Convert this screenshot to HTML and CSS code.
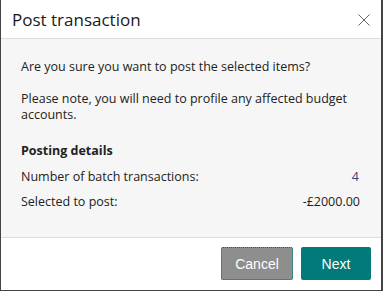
FILE: index.html
```html
<!DOCTYPE html>
<html lang="en">
<head>
    <meta charset="UTF-8">
    <title>Post transaction</title>
    <link rel="stylesheet" href="styles.css">
</head>
<body>
    <div class="dialog">
        <div class="dialog-header">
            <h1>Post transaction</h1>
            <button class="close-btn" aria-label="Close">
                <svg width="12" height="12" viewBox="0 0 12 12">
                    <path d="M0.5 0.5 L11.5 11.5 M11.5 0.5 L0.5 11.5" stroke="#666" stroke-width="1" fill="none"/>
                </svg>
            </button>
        </div>

        <div class="dialog-body">
            <p>Are you sure you want to post the selected items?</p>
            <p>Please note, you will need to profile any affected budget accounts.</p>

            <h2>Posting details</h2>
            <div class="detail-row">
                <span>Number of batch transactions:</span>
                <span class="value">4</span>
            </div>
            <div class="detail-row">
                <span>Selected to post:</span>
                <span>-£2000.00</span>
            </div>
        </div>

        <div class="dialog-footer">
            <button class="btn btn-cancel">Cancel</button>
            <button class="btn btn-next">Next</button>
        </div>
    </div>
</body>
</html>
```

FILE: styles.css
```css
body {
    margin: 0;
    background: #fff;
    font-family: "Open Sans", "Noto Sans", sans-serif;
    color: #222;
}
.dialog {
    width: 380px;
    height: 290px;
    border-left: 1px solid #444;
    border-right: 2px solid #444;
    border-bottom: 1px solid #444;
    display: flex;
    flex-direction: column;
    background: #fff;
}
.dialog-header {
    height: 39px;
    flex-shrink: 0;
    border-bottom: 1px solid #ddd;
    display: flex;
    align-items: center;
    justify-content: space-between;
    padding: 0 11px 0 11px;
    box-sizing: border-box;
}
.dialog-header h1 {
    margin: 0;
    font-size: 17px;
    line-height: 22px;
    font-weight: normal;
    color: #1a1a1a;
    padding-top: 2px;
}
.close-btn {
    background: none;
    border: none;
    padding: 0;
    width: 12px;
    height: 12px;
    display: flex;
    margin-top: 1px;
}
.dialog-body {
    flex: 1;
    background: #f6f6f6;
    border-bottom: 1px solid #ddd;
    padding: 20px 21px 0 20px;
    font-size: 12.5px;
}
.dialog-body p {
    margin: 0 0 16px 0;
    line-height: 16px;
}
.dialog-body h2 {
    font-size: 12.5px;
    line-height: 16px;
    font-weight: bold;
    margin: 20px 0 10px 0;
}
.detail-row {
    display: flex;
    justify-content: space-between;
    line-height: 16px;
    margin-bottom: 9px;
}
.detail-row .value {
    color: #3c3c78;
    padding-right: 1px;
}
.dialog-footer {
    height: 52px;
    flex-shrink: 0;
    display: flex;
    justify-content: flex-end;
    align-items: flex-start;
    gap: 8px;
    padding: 9px 10px 0 0;
    box-sizing: border-box;
}
.btn {
    font-family: "Liberation Sans", Arial, sans-serif;
    font-size: 14px;
    color: #fff;
    border: none;
    border-radius: 2px;
    height: 33px;
    cursor: pointer;
}
.btn-cancel {
    width: 72px;
    background: #8e8e8e;
    outline: 1px dotted #0a6e6e;
    outline-offset: -1px;
}
.btn-next {
    width: 70px;
    background: #017a79;
}
```
